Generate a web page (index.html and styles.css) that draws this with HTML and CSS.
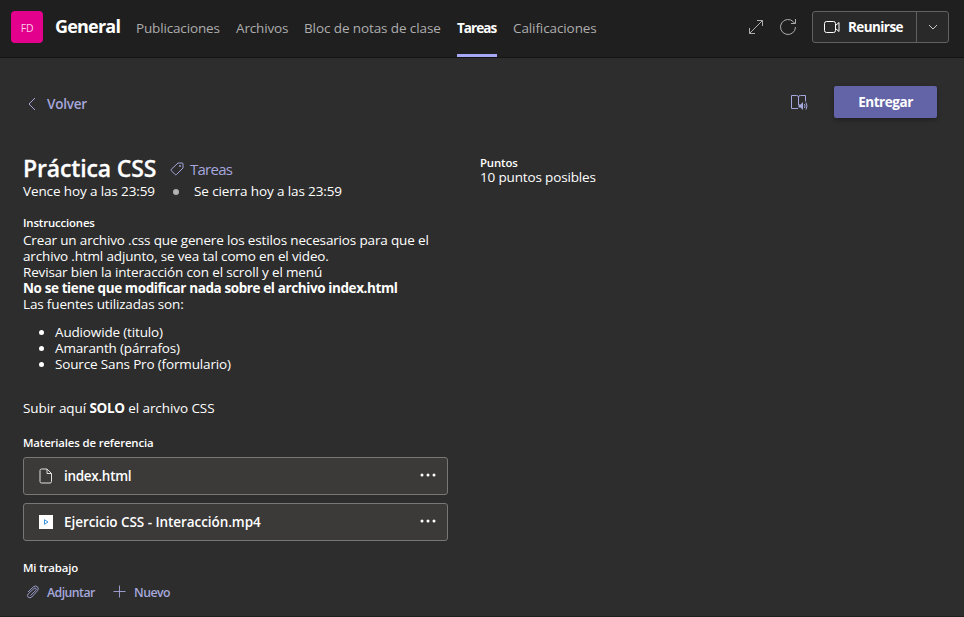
FILE: index.html
```html
<!DOCTYPE html>
<html lang="es">
<head>
<meta charset="utf-8">
<title>Práctica CSS</title>
<link rel="stylesheet" href="styles.css">
</head>
<body>
<header class="topbar">
  <div class="avatar">FD</div>
  <h1 class="channel">General</h1>
  <nav class="tabs">
    <a class="tab tab-posts">Publicaciones</a>
    <a class="tab tab-files">Archivos</a>
    <a class="tab tab-notes">Bloc de notas de clase</a>
    <a class="tab tab-tasks active">Tareas</a>
    <a class="tab tab-grades">Calificaciones</a>
  </nav>
  <div class="tools">
    <svg class="ico-expand" width="16" height="16" viewBox="0 0 16 16"><path d="M1.500 14.500 14.500 1.500M9 1.500h5.500V7M1.500 9v5.500H7"/></svg>
    <svg class="ico-refresh" width="18" height="18" viewBox="0 0 18 18"><path d="M16.500 9A7.500 7.500 0 1 1 14.600 4L16 5.500M16.500 1v4.500H12"/></svg>
    <div class="meet">
      <button class="meet-main">
        <svg width="18" height="14" viewBox="0 0 18 14"><rect x="1.500" y="1.500" width="11" height="11" rx="2"/><path d="m12.500 5.500 3.500-3v9l-3.500-3"/></svg>
        <span>Reunirse</span>
      </button>
      <button class="meet-more"><svg width="10" height="6" viewBox="0 0 10 6"><path d="m1 1 4 4 4-4"/></svg></button>
    </div>
  </div>
</header>
<main class="page">
  <div class="actions">
    <a class="back"><svg width="8" height="14" viewBox="0 0 8 14"><path d="M7 1 1 7l6 6"/></svg><span>Volver</span></a>
    <svg class="ico-reader" width="18" height="18" viewBox="0 0 18 18"><path d="M8 14.500H1.500v-13h5q2 0 2 1.500v8M8.500 3q0-1.500 2-1.500h5v6"/><path class="solid" d="M8.500 10.500h2l2.500-2.500v8l-2.500-2.500h-2z"/><path d="M14.500 10q1 2 0 4M16 8.500q2 3.500 0 7"/></svg>
    <button class="submit">Entregar</button>
  </div>
  <div class="columns">
    <section class="task">
      <div class="title-row">
        <h2>Práctica CSS</h2>
        <svg class="ico-tag" width="14" height="14" viewBox="0 0 14 14"><path d="M8 1h4q1 0 1 1v4L6.500 12.500q-.7.700-1.400 0L1.300 8.700q-.7-.7 0-1.400z"/><circle cx="10" cy="4" r=".6"/></svg>
        <a class="tag">Tareas</a>
      </div>
      <div class="dates"><span class="due">Vence hoy a las 23:59</span><i class="dot"></i><span class="close">Se cierra hoy a las 23:59</span></div>
      <h3 class="label">Instrucciones</h3>
      <div class="body">
        <div>Crear un archivo .css que genere los estilos necesarios para que el</div>
        <div>archivo .html adjunto, se vea tal como en el video.</div>
        <div>Revisar bien la interacción con el scroll y el menú</div>
        <div class="strong-line">No se tiene que modificar nada sobre el archivo index.html</div>
        <div>Las fuentes utilizadas son:</div>
        <ul>
          <li>Audiowide (titulo)</li>
          <li>Amaranth (párrafos)</li>
          <li>Source Sans Pro (formulario)</li>
        </ul>
        <div class="upload">Subir aquí <b>SOLO</b> el archivo CSS</div>
      </div>
      <h3 class="label refs">Materiales de referencia</h3>
      <div class="file">
        <svg class="ico-doc" width="14" height="16" viewBox="0 0 14 16"><path d="M2.500 1h5.500l4.500 4.500v8q0 1.500-1.500 1.500H2.500Q1 15 1 13.500v-11Q1 1 2.500 1zM8 1v4.500h4.500"/></svg>
        <span class="file-name">index.html</span>
        <svg class="dots" width="16" height="4" viewBox="0 0 16 4"><circle cx="2" cy="2" r="1.500"/><circle cx="8" cy="2" r="1.500"/><circle cx="14" cy="2" r="1.500"/></svg>
      </div>
      <div class="file">
        <svg class="ico-video" width="14" height="14" viewBox="0 0 14 14"><rect width="14" height="14"/><path d="M5.500 4.700v4.600L9 7z"/></svg>
        <span class="file-name video-name">Ejercicio CSS - Interacción.mp4</span>
        <svg class="dots" width="16" height="4" viewBox="0 0 16 4"><circle cx="2" cy="2" r="1.500"/><circle cx="8" cy="2" r="1.500"/><circle cx="14" cy="2" r="1.500"/></svg>
      </div>
      <h3 class="label work">Mi trabajo</h3>
      <div class="work-actions">
        <svg class="clip" width="14" height="14" viewBox="0 0 14 14"><path d="m2 7 5.500-5.300q2-1.500 4 .1 1.700 2 0 3.900L5.800 12q-2 1.500-3.500.3-1.600-1.600-.1-3.400L8 3.500q1-.9 1.900-.1.900.9 0 1.900L4.500 10.500"/></svg>
        <a class="attach">Adjuntar</a>
        <svg class="plus" width="14" height="14" viewBox="0 0 14 14"><path d="M7.500.5v12M1.500 6.500h12"/></svg>
        <a class="new">Nuevo</a>
      </div>
    </section>
    <section class="points">
      <h3 class="label">Puntos</h3>
      <div class="pts">10 puntos posibles</div>
    </section>
  </div>
</main>
</body>
</html>
```
FILE: styles.css
```css
* { box-sizing: border-box; }
body { margin: 0; height: 617px; overflow: hidden; background: #2d2d2d; color: #fff; font: 13.500px/16px "Open Sans", sans-serif; letter-spacing: -.155px; white-space: nowrap; border-bottom: 1px solid #1f1f1f; }
h1, h2, h3, ul { margin: 0; }
button { font: inherit; letter-spacing: inherit; color: inherit; padding: 0; border: 0; }
svg { fill: none; stroke: currentColor; flex: none; display: block; }
b { font-weight: 700; letter-spacing: -.3px; }
.topbar { height: 58px; background: #1f1f1f; border-bottom: 1px solid #141414; display: flex; align-items: flex-start; padding-left: 11px; }
.avatar { width: 32px; height: 32px; margin-top: 11px; border-radius: 4px; background: #e3008c; font-size: 10.500px; line-height: 34px; text-align: center; color: #f8d0e8; }
.channel { width: 82px; margin: 14px 0 0 12px; font-size: 18px; line-height: 24px; font-weight: 700; letter-spacing: -.8px; }
.tabs { display: flex; height: 57px; margin-left: -1px; }
.tab { height: 57px; padding-top: 19px; line-height: 19px; color: #adadad; margin-right: 16px; }
.tab-posts { width: 84px; }
.tab-files { width: 52px; }
.tab-notes { width: 137px; letter-spacing: -.1px; }
.tab-tasks { width: 40px; letter-spacing: -.95px; }
.tab-grades { width: 84px; letter-spacing: -.1px; }
.tab.active { color: #fff; font-weight: 700; border-bottom: 3px solid #a6a7f5; }
.tools { display: flex; align-items: center; height: 32px; margin: 11px 15px 0 auto; color: #adadad; }
.ico-expand { margin-right: 15px; }
.ico-refresh { margin-right: 15px; }
.meet { display: flex; width: 137px; height: 32px; border: 1px solid #616161; border-radius: 3px; background: #292929; color: #fff; }
.meet-main { width: 104px; display: flex; align-items: center; padding-left: 10px; gap: 7px; background: none; border-right: 1px solid #616161; font-weight: 700; letter-spacing: -.58px; }
.meet-more { flex: 1; display: flex; align-items: center; justify-content: center; background: none; color: #c8c8c8; }
.page { padding: 28px 27px 0 23px; }
.actions { display: flex; align-items: center; height: 32px; color: #a6a7dc; }
.back { display: flex; align-items: center; gap: 11px; padding: 4px 0 0 5px; font-weight: 600; letter-spacing: -.25px; }
.ico-reader { margin: 2px 26px 0 auto; }
.ico-reader .solid { fill: currentColor; stroke: none; }
.submit { width: 103px; height: 32px; background: #6264a7; border-radius: 2px; color: #fff; font-weight: 700; letter-spacing: -.45px; box-shadow: 0 2px 4px rgba(0,0,0,.3); }
.columns { display: flex; gap: 32px; padding-top: 36px; }
.task { width: 425px; }
.title-row { display: flex; align-items: center; height: 30px; color: #a6a7dc; }
.title-row h2 { width: 147px; margin-top: -2px; color: #fff; font-size: 23px; line-height: 30px; font-weight: 600; -webkit-text-stroke: .3px #fff; letter-spacing: -.15px; }
.tag { margin-left: 6px; font-size: 15px; line-height: 20px; padding-bottom: 1px; letter-spacing: -.75px; }
.dates { display: flex; align-items: center; height: 16px; margin-top: -1px; letter-spacing: -.12px; }
.due { width: 150px; }
.dot { width: 6px; height: 6px; border-radius: 50%; background: #b3b3b3; margin-right: 15px; margin-top: 2px; }
.label { font-size: 11.400px; line-height: 16px; font-weight: 600; letter-spacing: -.15px; }
.dates + .label { margin-top: 16px; }
.body { margin-top: 1px; }
.strong-line { font-weight: 700; letter-spacing: -.4px; }
.body ul { margin: 12px 0 28px; padding-left: 32px; }
.upload { letter-spacing: -.08px; }
.refs { margin: 19px 0 6px; }
.file { display: flex; align-items: center; height: 38px; margin-bottom: 8px; padding: 0 11px 0 15px; background: #3b3a39; border: 1px solid #797775; border-radius: 3px; }
.file-name { margin-left: 11px; font-weight: 600; letter-spacing: -.3px; }
.video-name { letter-spacing: -.06px; }
.dots { margin: -3px 0 0 auto; fill: #fff; stroke: none; }
.ico-doc { color: #e0e0e0; }
.ico-video rect { fill: #fff; stroke: none; }
.ico-video path { stroke: #3a96dd; }
.work { margin-top: 19px; }
.work-actions { display: flex; align-items: center; height: 18px; margin-top: 8px; padding-left: 3px; color: #a6a7dc; font-size: 12.300px; font-weight: 600; letter-spacing: -.55px; }
.work-actions svg { margin-top: -2px; stroke-width: .9; }
.attach { width: 65px; margin-left: 7px; }
.new { margin-left: 8px; letter-spacing: -.5px; }
.pts { margin-top: -1px; }
.points .label { padding-top: 1px; line-height: 15px; }
```
